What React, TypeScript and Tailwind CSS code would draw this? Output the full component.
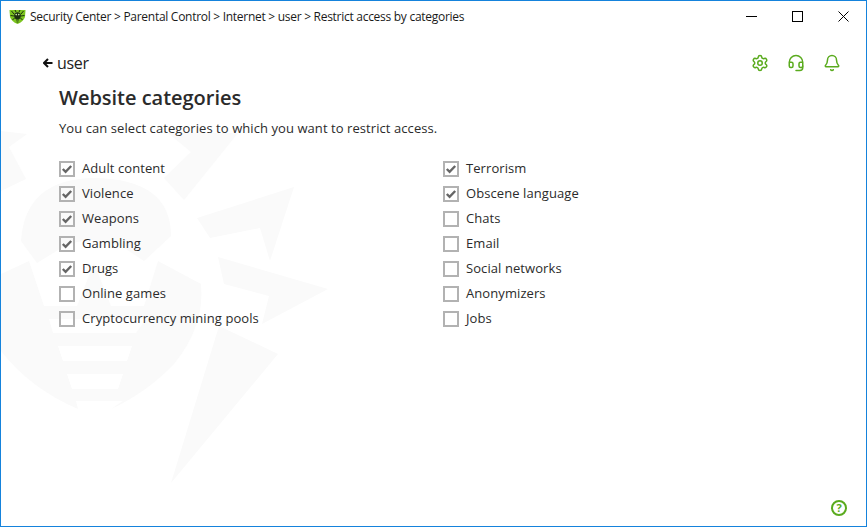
import React from 'react';
import { Bell, Headset, Settings } from 'lucide-react';

const leftColumn = [
  { label: 'Adult content', checked: true },
  { label: 'Violence', checked: true },
  { label: 'Weapons', checked: true },
  { label: 'Gambling', checked: true },
  { label: 'Drugs', checked: true },
  { label: 'Online games', checked: false },
  { label: 'Cryptocurrency mining pools', checked: false },
];

const rightColumn = [
  { label: 'Terrorism', checked: true },
  { label: 'Obscene language', checked: true },
  { label: 'Chats', checked: false },
  { label: 'Email', checked: false },
  { label: 'Social networks', checked: false },
  { label: 'Anonymizers', checked: false },
  { label: 'Jobs', checked: false },
];

function Logo() {
  return (
    <svg width="17" height="17" viewBox="0 0 17 17" className="shrink-0">
      <path d="M0.5 2 L16.5 2 L16 9 Q14.5 13.5 8.5 16 Q2.5 13.5 1 9 Z" fill="#7cc520" />
      <g stroke="#1c3010" strokeWidth="1" fill="none">
        <path d="M2.5 3 L5 6 M14.5 3 L12 6 M1.5 7.5 L5 8 M15.5 7.5 L12 8 M3.5 12 L5.5 10 M13.5 12 L11.5 10 M6 2 L7 4 M11 2 L10 4" />
      </g>
      <ellipse cx="8.5" cy="7.8" rx="3.4" ry="3.6" fill="#1c3010" />
      <circle cx="7.2" cy="6.6" r="0.8" fill="#d8f0b0" />
      <circle cx="9.8" cy="6.6" r="0.8" fill="#d8f0b0" />
      <path d="M6.5 9.5 H10.5 M7 12 H10 M7.5 14 H9.5" stroke="#1c3010" strokeWidth="0.8" />
    </svg>
  );
}

// faint spider behind the content
function Watermark() {
  return (
    <svg className="absolute left-0 top-0 pointer-events-none" width="340" height="490" viewBox="0 0 340 490">
      <g fill="#fafafa">
        <polygon points="0,130 26,133 8,146 25,178 0,190" />
        <polygon points="167,132 237,132 183,199 163,177 190,151" />
        <polygon points="196,217 293,186 269,260 259,227 209,237" />
        <polygon points="217,256 327,288 261,323 268,295 223,283" />
        <polygon points="170,482 218,325 277,353" />
        <path d="M20,240 Q24,178 93,177 Q170,178 170,235 L143,260 L122,246 Q93,232 62,246 L36,262 Z" />
        <path d="M0,273 L28,260 L43,305 L76,305 L93,262 L110,305 L143,305 L157,260 L200,283 Q204,325 173,363 Q145,392 110,408 L122,400 L75,400 L77,408 Q30,388 0,350 Z" />
      </g>
      <g fill="#ffffff">
        <polygon points="48,318 145,318 135,332 52,332" />
        <polygon points="57,345 131,345 126,360 62,360" />
        <polygon points="66,373 122,373 117,388 71,388" />
      </g>
    </svg>
  );
}

function CategoryRow({ label, checked }: { label: string; checked: boolean }) {
  return (
    <div className="flex h-[25px] items-center">
      <span className="flex h-4 w-4 shrink-0 items-center justify-center border-2 border-[#b2b2b2]">
        {checked && (
          <svg width="12" height="12" viewBox="0 0 12 12">
            <path d="M1.8 6 L4.6 8.8 L10.2 3" fill="none" stroke="#666666" strokeWidth="2.4" />
          </svg>
        )}
      </span>
      <span className="ml-[7px] text-[13px] tracking-[0.08px] text-[#2b2b2b]">{label}</span>
    </div>
  );
}

export default function App() {
  return (
    <div className="relative flex h-[527px] w-[867px] flex-col overflow-hidden border border-[#1583dc] bg-white font-['Open_Sans','Noto_Sans',sans-serif]">
      <Watermark />

      <div className="relative flex h-[31px] items-center">
        <div className="ml-2 mr-[4px]">
          <Logo />
        </div>
        <span className="text-xs tracking-[-0.28px] text-[#1a1a1a]">
          Security Center &gt; Parental Control &gt; Internet &gt; user &gt; Restrict access by categories
        </span>
        <div className="ml-auto flex items-center">
          <button className="flex h-[31px] w-[45px] items-center justify-center">
            <svg width="11" height="11" viewBox="0 0 11 11">
              <path d="M0 5.5 H11" stroke="#000" strokeWidth="1" />
            </svg>
          </button>
          <button className="flex h-[31px] w-[46px] items-center justify-center">
            <svg width="11" height="11" viewBox="0 0 11 11">
              <rect x="0.5" y="0.5" width="10" height="10" fill="none" stroke="#000" strokeWidth="1" />
            </svg>
          </button>
          <button className="flex h-[31px] w-[46px] items-center justify-center">
            <svg width="11" height="11" viewBox="0 0 11 11">
              <path d="M0.5 0.5 L10.5 10.5 M10.5 0.5 L0.5 10.5" stroke="#000" strokeWidth="1" />
            </svg>
          </button>
        </div>
      </div>

      <div className="relative mt-[15px] flex h-[32px] items-center pl-[42px] pr-[25px]">
        <svg width="10" height="10" viewBox="0 0 10 10">
          <path d="M9.5 5 H1.5 M5 1 L1 5 L5 9" fill="none" stroke="#111" strokeWidth="2" />
        </svg>
        <span className="ml-[4px] text-base font-medium tracking-[-0.3px] text-[#222]">user</span>
        <div className="ml-auto flex items-center gap-[18px] text-[#5aab1e]">
          <Settings size={18} strokeWidth={2} />
          <Headset size={18} strokeWidth={2} />
          <Bell size={18} strokeWidth={2} />
        </div>
      </div>

      <div className="relative flex flex-1 flex-col pl-[58px]">
        <h1 className="mt-[5px] text-xl font-semibold leading-[28px] tracking-[-0.02px] text-[#2b2b2b]">Website categories</h1>
        <p className="mt-[7px] text-[13px] leading-[18px] tracking-[0.07px] text-[#2b2b2b]">
          You can select categories to which you want to restrict access.
        </p>
        <div className="mt-[19px] grid grid-cols-[384px_1fr]">
          <div>
            {leftColumn.map((c) => (
              <CategoryRow key={c.label} label={c.label} checked={c.checked} />
            ))}
          </div>
          <div>
            {rightColumn.map((c) => (
              <CategoryRow key={c.label} label={c.label} checked={c.checked} />
            ))}
          </div>
        </div>
      </div>

      <div className="absolute bottom-[10px] right-[19px] flex h-4 w-4 items-center justify-center rounded-full border-2 border-[#5aab1e] text-[11px] font-bold text-[#5aab1e]">
        ?
      </div>
    </div>
  );
}
